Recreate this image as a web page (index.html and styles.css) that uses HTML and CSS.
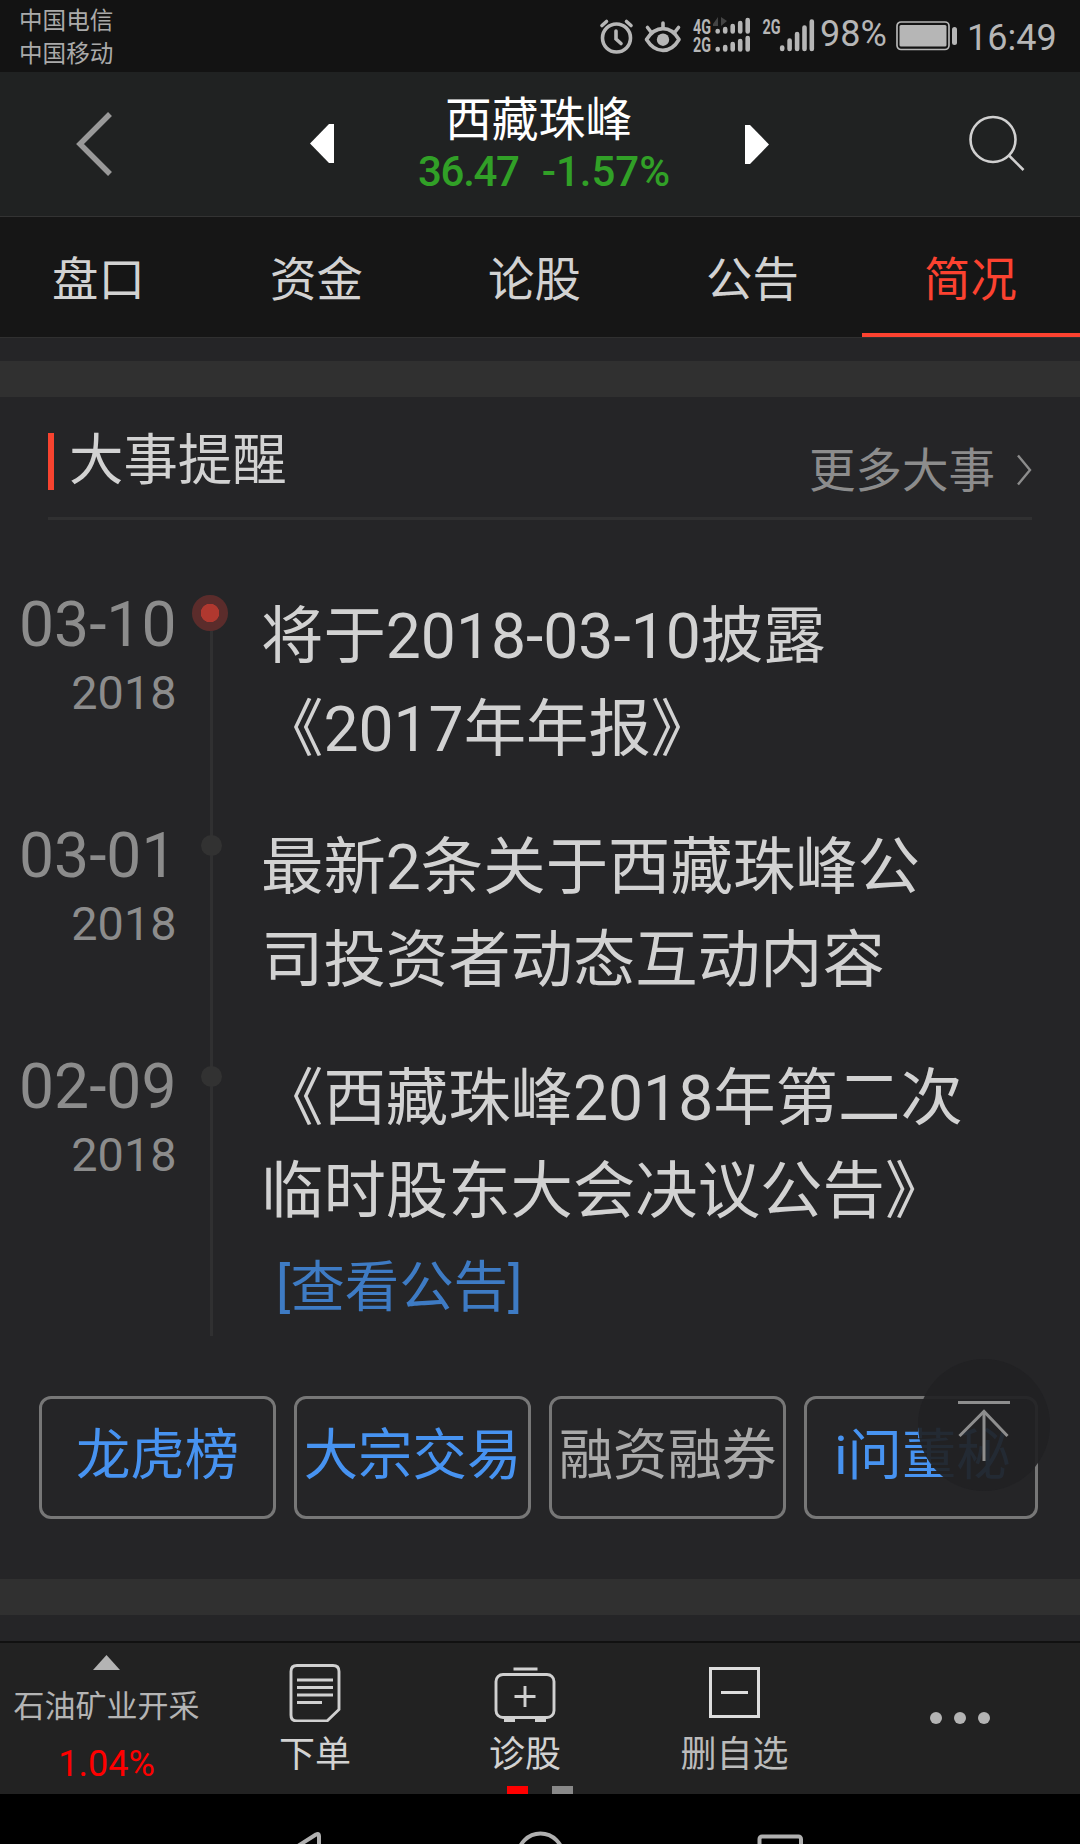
FILE: index.html
```html
<!DOCTYPE html>
<html lang="zh-CN">
<head>
<meta charset="utf-8">
<title>西藏珠峰</title>
<link rel="stylesheet" href="styles.css">
</head>
<body>
<div class="screen">
  <div class="status">
    <div class="carriers"><span>中国电信</span><span>中国移动</span></div>
    <div class="indicators">
      <svg class="status-icons" width="220" height="72" viewBox="596 0 220 72">
        <g fill="none" stroke="#b6b6b6" stroke-width="3.6" stroke-linecap="round">
          <circle cx="616.5" cy="38" r="14"/>
          <path d="M616 31v8l5 4.500M602 25.500l4.500-4M631 25.500l-4.500-4" />
          <path d="M646.500 39.500c9-14.500 24-14.500 32.500 0c-8.500 14.500-23.500 14.500-32.500 0z" stroke-linejoin="round"/>
          <path d="M663 28v-5M651 32l-3.500-4.500M675 32l3.500-4.500"/>
        </g>
        <circle cx="663" cy="39.700" r="6.200" fill="#b6b6b6"/>
        <g class="net" fill="#b6b6b6">
          <text x="693" y="33.500" textLength="18" lengthAdjust="spacingAndGlyphs">4G</text>
          <text x="693" y="51.500" textLength="18" lengthAdjust="spacingAndGlyphs">2G</text>
          <text x="762.500" y="33.500" textLength="18" lengthAdjust="spacingAndGlyphs">2G</text>
        </g>
        <path d="M713 24l5-7v9h-5zM721 17v9l6-5z" fill="#444"/>
        <g stroke="#b6b6b6" stroke-width="4.600" stroke-linecap="round">
          <path d="M717.700 31v.5M725.200 29v2.500M732.700 26v5.500M740.200 23v8.500M747.700 20v11.500"/>
          <path d="M717.700 49v.5M725.200 47v2.500M732.700 44v5.500M740.200 41v8.500M747.700 38v11.500"/>
          <path d="M782.200 47.500v1.500M789.600 40.500v8.500M797.100 34v15M804.500 27.500v21.500M811.800 21.500v27.500"/>
        </g>
      </svg>
      <span class="pct">98%</span>
      <svg class="battery" width="62" height="30" viewBox="0 0 62 30">
        <rect x="1" y="1" width="52" height="27.500" rx="4" fill="none" stroke="#b6b6b6" stroke-width="1.700"/>
        <rect x="3.500" y="4" width="47" height="21.500" rx="1.500" fill="#b6b6b6"/>
        <rect x="56" y="6" width="5" height="18" rx="2.500" fill="#b6b6b6"/>
      </svg>
      <span class="clock">16:49</span>
    </div>
  </div>

  <header class="header">
    <svg class="back" width="40" height="68" viewBox="0 0 40 68"><path d="M35 4L5 34l30 30" fill="none" stroke="#999" stroke-width="5.500"/></svg>
    <svg class="prev" width="24" height="39" viewBox="0 0 24 39"><path d="M24 0h-5L0 19.500L19 39h5z" fill="#fff"/></svg>
    <div class="stock">
      <h1>西藏珠峰</h1>
      <div class="quote"><span class="price">36.47</span><span>-1.57%</span></div>
    </div>
    <svg class="next" width="24" height="39" viewBox="0 0 24 39"><path d="M0 0h5l19 19.500L5 39H0z" fill="#fff"/></svg>
    <svg class="search" width="58" height="58" viewBox="0 0 58 58"><g fill="none" stroke="#d0d0d0" stroke-width="2.600"><circle cx="25" cy="25.500" r="22.500"/><path d="M41 41.500l14.500 14.500"/></g></svg>
  </header>

  <nav class="tabs">
    <a>盘口</a><a>资金</a><a>论股</a><a>公告</a><a class="active">简况</a>
  </nav>

  <main class="content">
    <div class="band"></div>
    <section class="events">
      <div class="section-head">
        <h2>大事提醒</h2>
        <a class="more">更多大事<svg width="16" height="32" viewBox="0 0 16 32"><path d="M2 1.500L14 16L2 30.500" fill="none" stroke="#8c8c8c" stroke-width="2.400"/></svg></a>
      </div>
      <ul class="timeline">
        <li>
          <div class="date"><b>03-10</b><span>2018</span></div>
          <div class="rail first"><i class="dot current"></i></div>
          <div class="body">将于2018-03-10披露<br>《2017年年报》</div>
        </li>
        <li>
          <div class="date"><b>03-01</b><span>2018</span></div>
          <div class="rail"><i class="dot"></i></div>
          <div class="body">最新2条关于西藏珠峰公<br>司投资者动态互动内容</div>
        </li>
        <li>
          <div class="date"><b>02-09</b><span>2018</span></div>
          <div class="rail"><i class="dot"></i></div>
          <div class="body">《西藏珠峰2018年第二次<br>临时股东大会决议公告》<a class="view">[查看公告]</a></div>
        </li>
      </ul>
      <div class="shortcuts">
        <a>龙虎榜</a><a>大宗交易</a><a class="off">融资融券</a><a class="ask">i问董秘</a>
        <div class="to-top"><svg width="132" height="132" viewBox="0 0 132 132"><g fill="none" stroke="#8e8e8e" stroke-width="3"><path d="M40 43.500h52M66 52v50"/><path d="M41.500 77L66 52.500L89.500 77"/></g></svg></div>
      </div>
    </section>
    <div class="band"></div>
  </main>

  <footer class="toolbar">
    <div class="tool sector">
      <svg width="27" height="15" viewBox="0 0 27 15"><path d="M0 15L13.500 0L27 15z" fill="#b4b4b4"/></svg>
      <span class="sector-name">石油矿业开采</span>
      <span class="sector-change">1.04%</span>
    </div>
    <div class="tool">
      <svg width="52" height="60" viewBox="0 0 52 60"><g fill="none" stroke="#d0d0d0" stroke-width="2.900"><path d="M8 3.500h36q6 0 6 6v38L38 59H8q-6 0-6-6V9.500q0-6 6-6z"/><path d="M8 18h36M8 25.500h36M8 33h36M8 40.500h25"/></g></svg>
      <span>下单</span>
    </div>
    <div class="tool">
      <svg width="62" height="60" viewBox="0 0 62 60"><g fill="none" stroke="#d0d0d0" stroke-width="2.900"><rect x="2" y="12.500" width="58" height="43" rx="7"/><path d="M19.500 7h24M31 24v21M20.500 34.500h21"/></g><path d="M10 56h11v4H10zM41 56h11v4H41z" fill="#d0d0d0"/></svg>
      <span>诊股</span>
      <div class="pager"><i></i><i></i></div>
    </div>
    <div class="tool remove">
      <svg width="52" height="60" viewBox="0 0 52 60"><path d="M1.500 6.500h48v48h-48zM12 30.500h27" fill="none" stroke="#ddd" stroke-width="3"/></svg>
      <span>删自选</span>
    </div>
    <div class="tool overflow"><i></i><i></i><i></i></div>
  </footer>

  <div class="navbar">
    <svg width="1080" height="50" viewBox="0 0 1080 50"><g fill="none" stroke="#b0b0b0" stroke-width="4"><path d="M319 85V42q0-3-3-1.500L283 61.500L319 84" stroke-linejoin="round"/><circle cx="540.500" cy="62" r="22.500"/><rect x="759.500" y="42.500" width="41.500" height="40" rx="2.500"/></g></svg>
  </div>
</div>
</body>
</html>
```
FILE: styles.css
```css
* { box-sizing: border-box; }
body {
  margin: 0;
  background: #000;
  font-family: Roboto, "Noto Sans CJK SC", sans-serif;
  color: #d2d2d2;
  text-spacing-trim: space-all;
}
h1, h2, ul { margin: 0; padding: 0; font-weight: 400; list-style: none; }
svg { display: block; flex: none; }
.screen { width: 1080px; height: 1844px; overflow: hidden; display: flex; flex-direction: column; }

.status { height: 72px; background: #131313; display: flex; justify-content: space-between; padding: 0 24px 0 19px; color: #b6b6b6; flex: none; }
.carriers { display: flex; flex-direction: column; padding-top: 5px; font-size: 23.6px; line-height: 33px; color: #aaa; }
.indicators { display: flex; font-size: 36px; line-height: 36px; }
.net { font: 700 20px/1 Roboto, sans-serif; }
.pct { padding: 16px 0 0 4px; width: 80px; }
.battery { margin-top: 21px; }
.clock { padding: 20px 0 0 9px; width: 98px; }

.header { height: 145px; background: #202222; border-bottom: 1px solid #333; display: flex; flex: none; padding-left: 75px; }
.back { margin-top: 38px; }
.prev { margin: 52px 0 0 195px; }
.stock { width: 411px; padding: 20px 0 0 84px; }
.stock h1 { color: #fff; font-size: 46.800px; line-height: 56px; padding-left: 27px; }
.quote { display: flex; gap: 23px; color: #31a027; font-size: 42px; line-height: 42px; font-weight: 500; margin-top: 3px; }
.price { letter-spacing: -1.3px; }
.next { margin-top: 53px; }
.search { margin: 42px 0 0 199px; }

.tabs { height: 121px; background: #161616; border-bottom: 1px solid #303030; display: flex; flex: none; justify-content: flex-end; }
.tabs a { width: 218px; flex: none; text-align: center; font-size: 46.4px; line-height: 126px; height: 120px; padding-right: 1px; }
.tabs .active { color: #fc4230; border-bottom: 4px solid #fc4230; }

.content { background: #252527; height: 1303px; padding-top: 23px; flex: none; }
.band { height: 36px; background: #303030; }
.events { height: 1182px; }
.section-head { margin: 0 48px; height: 123px; border-bottom: 3px solid #303031; display: flex; justify-content: space-between; align-items: flex-start; }
.section-head h2 { margin-top: 36px; height: 57px; border-left: 6px solid #f7432f; padding-left: 15px; font-size: 54.400px; line-height: 55px; }
.more { display: flex; gap: 21px; margin-top: 46px; font-size: 46.500px; line-height: 56px; color: #8c8c8c; align-items: flex-start; }
.more svg { margin-top: 11px; }

.timeline { padding-top: 70px; }
.timeline li { display: flex; height: 231px; }
.timeline li:last-child { height: 284px; }
.date { width: 178px; padding: 4px 1.5px 0 0; display: flex; flex-direction: column; align-items: flex-end; color: #8c8c8c; }
.date b { font-weight: 400; font-size: 62.400px; line-height: 62px; }
.date span { font-size: 46.800px; line-height: 46px; margin-top: 14px; }
.rail { width: 66px; display: flex; flex-direction: column; align-items: center; background: linear-gradient(#303031, #303031) 32px 0 / 3px 100% no-repeat; }
.rail.first { background-position: 32px 25px; }
.dot { width: 21px; height: 21px; border-radius: 50%; background: #323232; margin: 14px 0 0 1px; }
.dot.current { width: 36px; height: 36px; margin: 5px 2px 0 0; background: radial-gradient(circle, #b0382f 0 9px, #5b2c2b 9.500px); }
.body { padding-left: 17px; font-size: 62.400px; line-height: 93px; white-space: nowrap; }
.view { display: block; margin: 12px 0 0 15px; font-size: 54.400px; line-height: 76px; color: #3e7bc4; }

.shortcuts { position: relative; display: grid; grid-template-columns: 237px 237px 237px 234px; gap: 18px; padding: 60px 0 0 39px; }
.shortcuts a { height: 123px; border: 3px solid #777; border-radius: 12px; text-align: center; font-size: 54.400px; line-height: 113px; color: #4793f1; white-space: nowrap; }
.shortcuts .off { color: #aaa; }
.shortcuts .ask { padding-left: 3px; }
.to-top { position: absolute; left: 918px; top: 23px; width: 132px; height: 132px; border-radius: 50%; background: rgba(33, 33, 35, .92); }

.toolbar { height: 153px; background: #222; border-top: 2px solid #111; display: flex; flex: none; }
.tool { width: 210px; display: flex; flex-direction: column; align-items: center; padding-top: 19px; font-size: 36px; line-height: 40px; position: relative; }
.tool span { margin-top: 13px; white-space: nowrap; }
.tool.sector { width: 210px; padding: 12px 0 0 3px; color: #b4b4b4; }
.tool .sector-name { font-size: 31px; line-height: 36px; margin-top: 19px; }
.tool .sector-change { color: #f00; line-height: 36px; margin-top: 21px; }
.remove { color: #bbb; padding-right: 1px; }
.pager { position: absolute; left: 87px; bottom: 0; display: flex; gap: 24px; }
.pager i { width: 21px; height: 8px; background: #888; }
.pager i:first-child { background: #f00; }
.overflow { width: 240px; flex-direction: row; justify-content: center; align-items: flex-start; gap: 12px; padding-top: 69px; }
.overflow i { width: 12px; height: 12px; border-radius: 50%; background: #b4b4b4; }

.navbar { height: 50px; background: #000; flex: none; }
```
